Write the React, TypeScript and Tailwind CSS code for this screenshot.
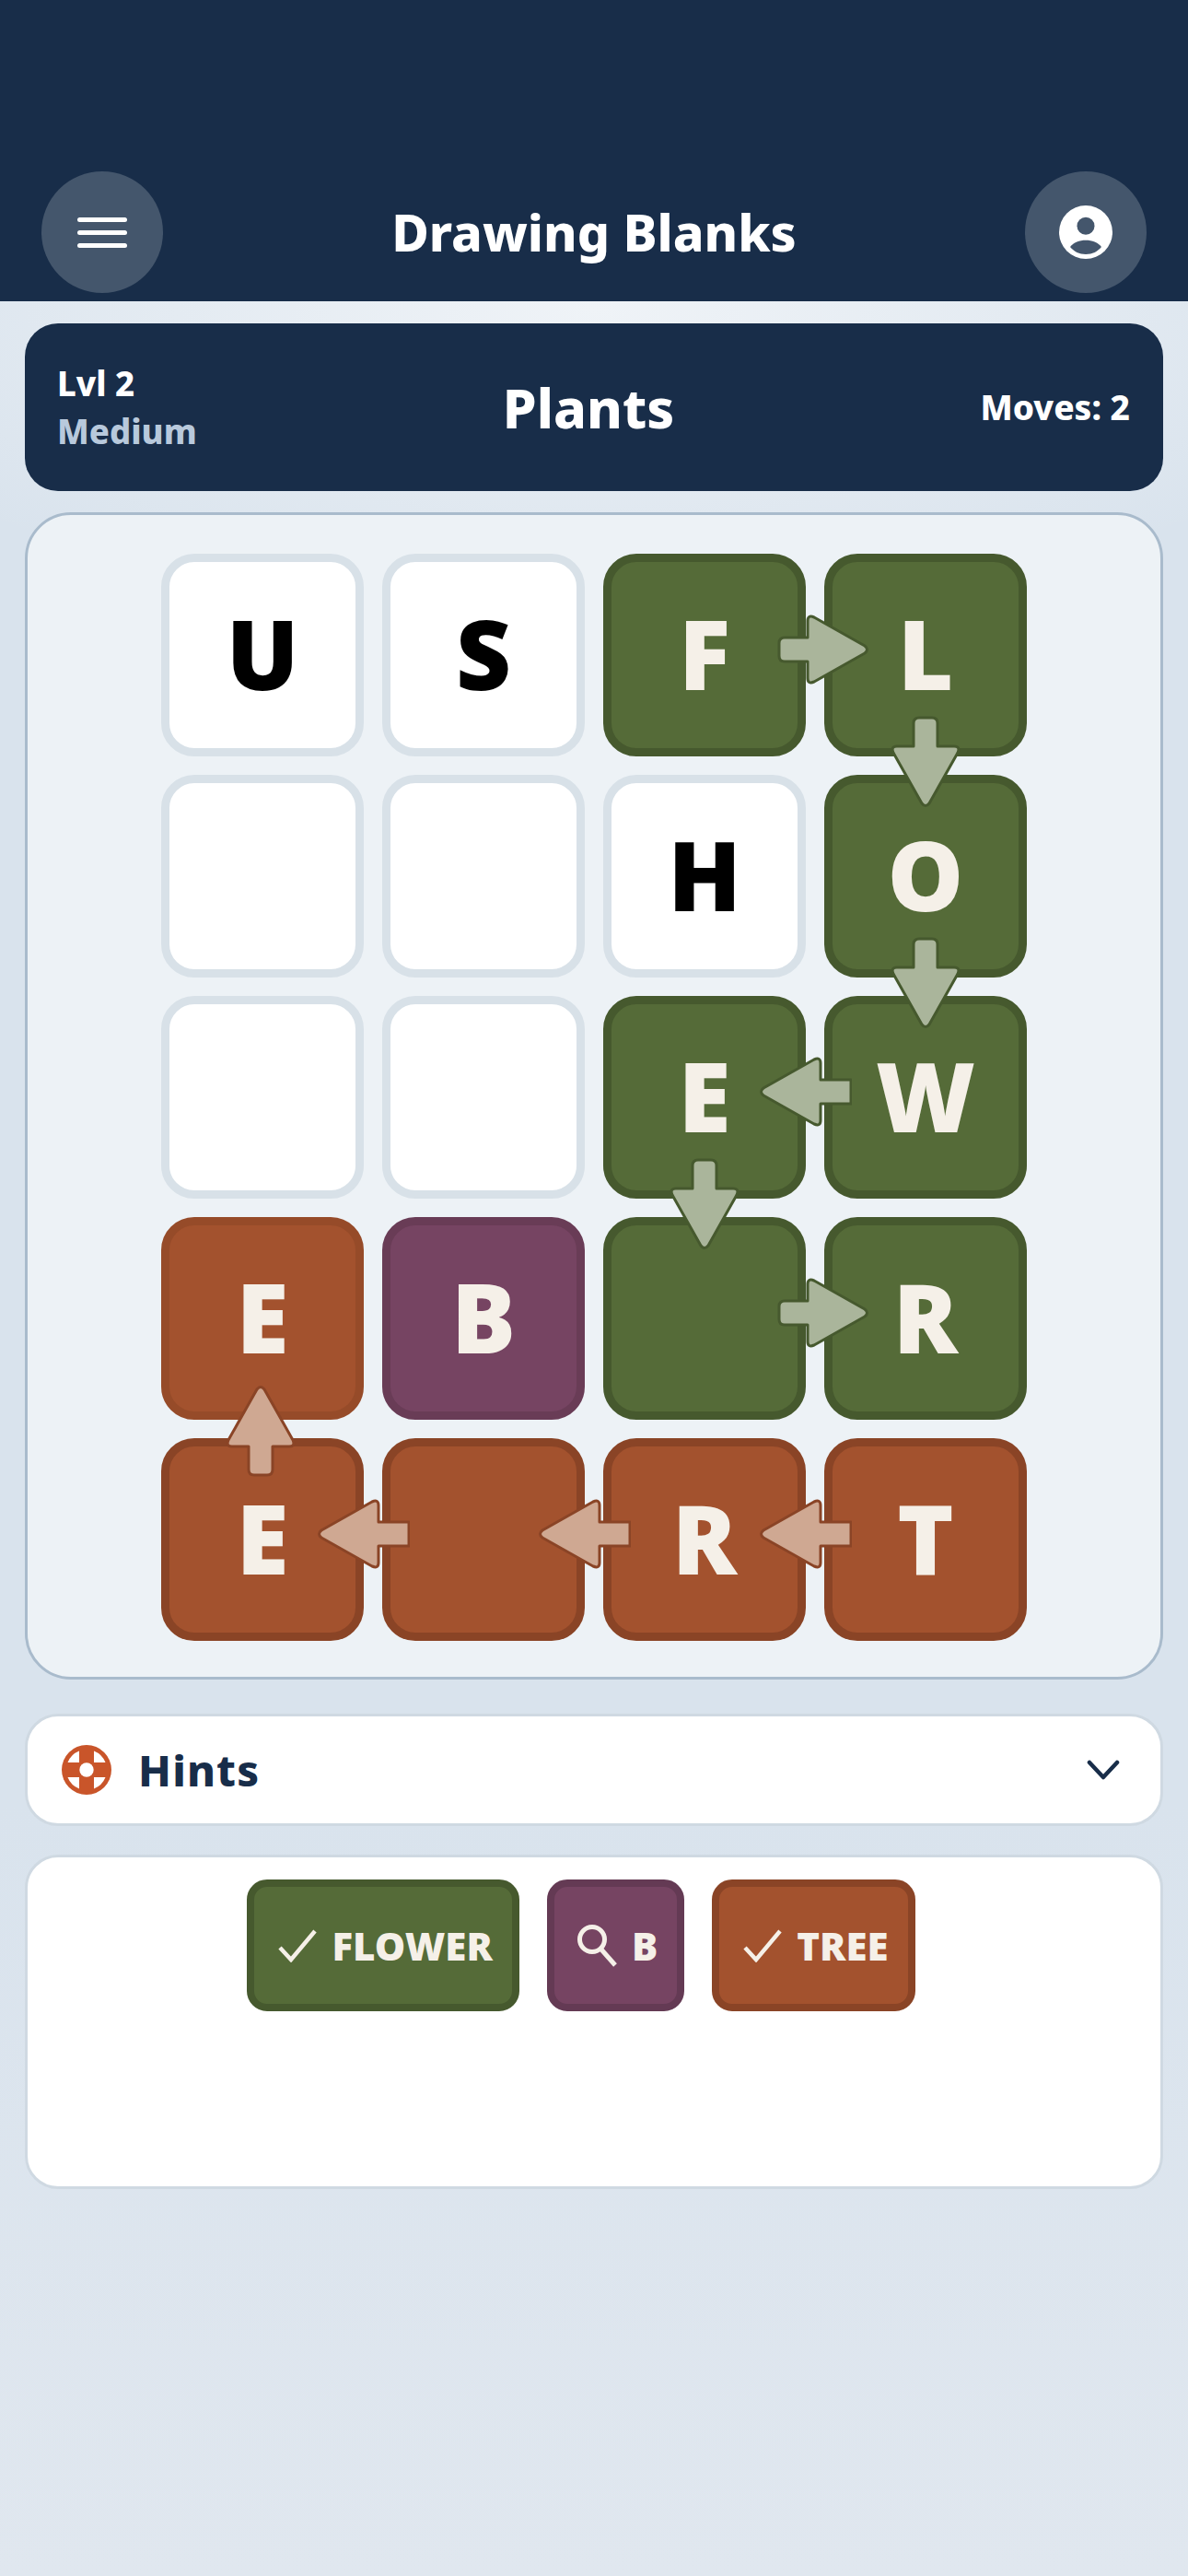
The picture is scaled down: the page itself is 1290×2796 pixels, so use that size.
const FONT = "font-['Noto_Sans',sans-serif]";

type Dir = "right" | "down" | "left" | "up";
type TileKind = "empty" | "green" | "rust" | "rustSoft" | "purple";

const tileStyles: Record<TileKind, string> = {
  empty: "bg-white border-[#d8e1e8] text-black",
  green: "bg-[#556b38] border-[#46592e] text-[#f5f0e8]",
  rust: "bg-[#a3522e] border-[#8a4426] text-[#f5f0e8]",
  rustSoft: "bg-[#a3522e] border-[#964b29] text-[#f5f0e8]",
  purple: "bg-[#764462] border-[#693c56] text-[#f5f0e8]",
};

const board: { letter?: string; kind: TileKind; arrow?: Dir; tone?: "green" | "rust" }[] = [
  { letter: "U", kind: "empty" },
  { letter: "S", kind: "empty" },
  { letter: "F", kind: "green", arrow: "right", tone: "green" },
  { letter: "L", kind: "green", arrow: "down", tone: "green" },
  { kind: "empty" },
  { kind: "empty" },
  { letter: "H", kind: "empty" },
  { letter: "O", kind: "green", arrow: "down", tone: "green" },
  { kind: "empty" },
  { kind: "empty" },
  { letter: "E", kind: "green", arrow: "down", tone: "green" },
  { letter: "W", kind: "green", arrow: "left", tone: "green" },
  { letter: "E", kind: "rustSoft" },
  { letter: "B", kind: "purple" },
  { kind: "green", arrow: "right", tone: "green" },
  { letter: "R", kind: "green" },
  { letter: "E", kind: "rust", arrow: "up", tone: "rust" },
  { kind: "rust", arrow: "left", tone: "rust" },
  { letter: "R", kind: "rust", arrow: "left", tone: "rust" },
  { letter: "T", kind: "rust", arrow: "left", tone: "rust" },
];

const arrowPlace: Record<Dir, string> = {
  right: "left-[179px] top-[56px] w-[102px] h-[78px]",
  left: "left-[-81px] top-[56px] w-[102px] h-[78px]",
  down: "left-[62px] top-[164px] w-[78px] h-[106px]",
  up: "left-[60px] top-[-70px] w-[78px] h-[106px]",
};

// rounded arrow pointing right, other directions are rotated inside the svg
const ROUND_TAIL = "M8 26H33V8Q33 1 40 4L95 35Q100 39 95 43L40 74Q33 77 33 70V52H8Q2 52 2 46V32Q2 26 8 26Z";
const FLAT_TAIL = "M0 26H33V8Q33 1 40 4L95 35Q100 39 95 43L40 74Q33 77 33 70V52H0Z";

function Arrow({ dir, tone }: { dir: Dir; tone: "green" | "rust" }) {
  const fill = tone === "green" ? "#aab59b" : "#cfa892";
  const stroke = tone === "green" ? "#46592e" : "#8a4426";
  const vertical = dir === "up" || dir === "down";
  const transform =
    dir === "down"
      ? "translate(78 2) rotate(90)"
      : dir === "up"
        ? "translate(0 102) rotate(-90)"
        : dir === "left"
          ? "translate(100 78) rotate(180)"
          : undefined;
  return (
    <svg
      className={`absolute z-10 ${arrowPlace[dir]}`}
      viewBox={vertical ? "0 0 78 104" : "0 0 100 78"}
    >
      <g transform={transform}>
        <path
          d={dir === "left" ? FLAT_TAIL : ROUND_TAIL}
          fill={fill}
          stroke={stroke}
          strokeWidth="3"
          strokeLinejoin="round"
        />
      </g>
    </svg>
  );
}

function Tile({ cell }: { cell: (typeof board)[number] }) {
  return (
    <div
      className={`relative w-[220px] h-[220px] rounded-[36px] border-[9px] pb-[5px] flex items-center justify-center text-[104px] leading-none font-black ${tileStyles[cell.kind]}`}
    >
      {cell.letter}
      {cell.arrow && cell.tone && <Arrow dir={cell.arrow} tone={cell.tone} />}
    </div>
  );
}

function MenuIcon() {
  return (
    <div className="flex flex-col gap-[9px] w-[54px]">
      <div className="h-[5px] rounded-full bg-white" />
      <div className="h-[5px] rounded-full bg-white" />
      <div className="h-[5px] rounded-full bg-white" />
    </div>
  );
}

function ProfileIcon() {
  return (
    <svg width="58" height="58" viewBox="0 0 58 58">
      <circle cx="29" cy="29" r="29" fill="#fff" />
      <circle cx="29" cy="22.3" r="9.5" fill="#44566c" />
      <path d="M12 45C16 40 22 37.7 29 37.7C36 37.7 42 40 46 45C42 50 36 53 29 53C22 53 16 50 12 45Z" fill="#44566c" />
    </svg>
  );
}

function RingIcon() {
  return (
    <svg width="54" height="54" viewBox="0 0 54 54">
      <circle cx="27" cy="27" r="27" fill="#c9552a" />
      <path d="M19 6.5V19H6.5A22 22 0 0 1 19 6.5Z" fill="#fff" />
      <path d="M35 6.5V19H47.5A22 22 0 0 0 35 6.5Z" fill="#fff" />
      <path d="M19 47.5V35H6.5A22 22 0 0 0 19 47.5Z" fill="#fff" />
      <path d="M35 47.5V35H47.5A22 22 0 0 1 35 47.5Z" fill="#fff" />
      <circle cx="27" cy="27" r="7.7" fill="#fff" />
    </svg>
  );
}

function Pill({ className, icon, text }: { className: string; icon: React.ReactNode; text: string }) {
  return (
    <div className={`h-[143px] rounded-[22px] border-[8px] pl-[25px] pr-[21px] flex items-center gap-[15px] text-[42px] font-black text-[#f5f0e8] ${className}`}>
      {icon}
      {text}
    </div>
  );
}

function CheckIcon() {
  return (
    <svg width="44" height="36" viewBox="0 0 44 36" fill="none" stroke="#f5f0e8" strokeWidth="4.5">
      <path d="M3 20L15 33L41 2" />
    </svg>
  );
}

function SearchIcon() {
  return (
    <svg width="44" height="46" viewBox="0 0 44 46" fill="none" stroke="#f5f0e8" strokeWidth="5">
      <circle cx="16" cy="16" r="13.5" />
      <path d="M26 27L41 44" />
    </svg>
  );
}

export default function App() {
  return (
    <div className={`${FONT} min-h-[2796px] w-[1290px] bg-[radial-gradient(ellipse_70%_12%_at_50%_12%,#eff3f7,transparent),linear-gradient(180deg,#d9e3ed_0%,#d9e3ed_70%,#e0e7ef_100%)]`}>
      {/* Top bar */}
      <header className="h-[327px] bg-[#182d49] px-[45px] pb-[9px] flex items-end justify-between">
        <div className="w-[132px] h-[132px] rounded-full bg-[#44566c] flex items-center justify-center">
          <MenuIcon />
        </div>
        <h1 className="text-[55.5px] leading-[132px] font-extrabold text-white">Drawing Blanks</h1>
        <div className="w-[132px] h-[132px] rounded-full bg-[#44566c] flex items-center justify-center">
          <ProfileIcon />
        </div>
      </header>

      <main className="px-[27px] pt-[24px] flex flex-col">
        {/* Level info */}
        <div className="h-[182px] rounded-[36px] bg-[#182d49] px-[36px] flex items-center justify-between text-white">
          <div className="text-[36.5px] font-extrabold leading-[52px] ml-[-1px]">
            <div>Lvl 2</div>
            <div className="text-[#b8c9dc]">Medium</div>
          </div>
          <div className="text-[59px] font-extrabold">Plants</div>
          <div className="text-[37px] font-extrabold">Moves: 2</div>
        </div>

        {/* Board */}
        <div className="mt-[23px] h-[1267px] rounded-[50px] border-[3px] border-[#a9bbcc] bg-[#edf2f6] pt-[42px] flex justify-center">
          <div className="grid grid-cols-4 gap-[20px] h-fit">
            {board.map((cell, i) => (
              <Tile key={i} cell={cell} />
            ))}
          </div>
        </div>

        {/* Hints */}
        <div className="mt-[37px] h-[122px] rounded-[36px] border-[3px] border-[#cfd9e2] bg-white pl-[37px] pr-[44px] flex items-center justify-between">
          <div className="flex items-center gap-[29px]">
            <RingIcon />
            <span className="text-[47px] font-extrabold tracking-wide text-[#182d49]">Hints</span>
          </div>
          <svg width="36" height="22" viewBox="0 0 36 22" fill="none" stroke="#182d49" strokeWidth="4.5" strokeLinecap="round" strokeLinejoin="round">
            <path d="M3 3L18 19L33 3" />
          </svg>
        </div>

        {/* Found words */}
        <div className="mt-[31px] h-[363px] rounded-[36px] border-[3px] border-[#cfd9e2] bg-white pt-[24px] pr-[28px] flex justify-center items-start gap-[30px]">
          <Pill className="bg-[#556b38] border-[#46592e]" icon={<CheckIcon />} text="FLOWER" />
          <Pill className="bg-[#764462] border-[#643a54]" icon={<SearchIcon />} text="B" />
          <Pill className="bg-[#a3522e] border-[#8a4426]" icon={<CheckIcon />} text="TREE" />
        </div>
      </main>
    </div>
  );
}
